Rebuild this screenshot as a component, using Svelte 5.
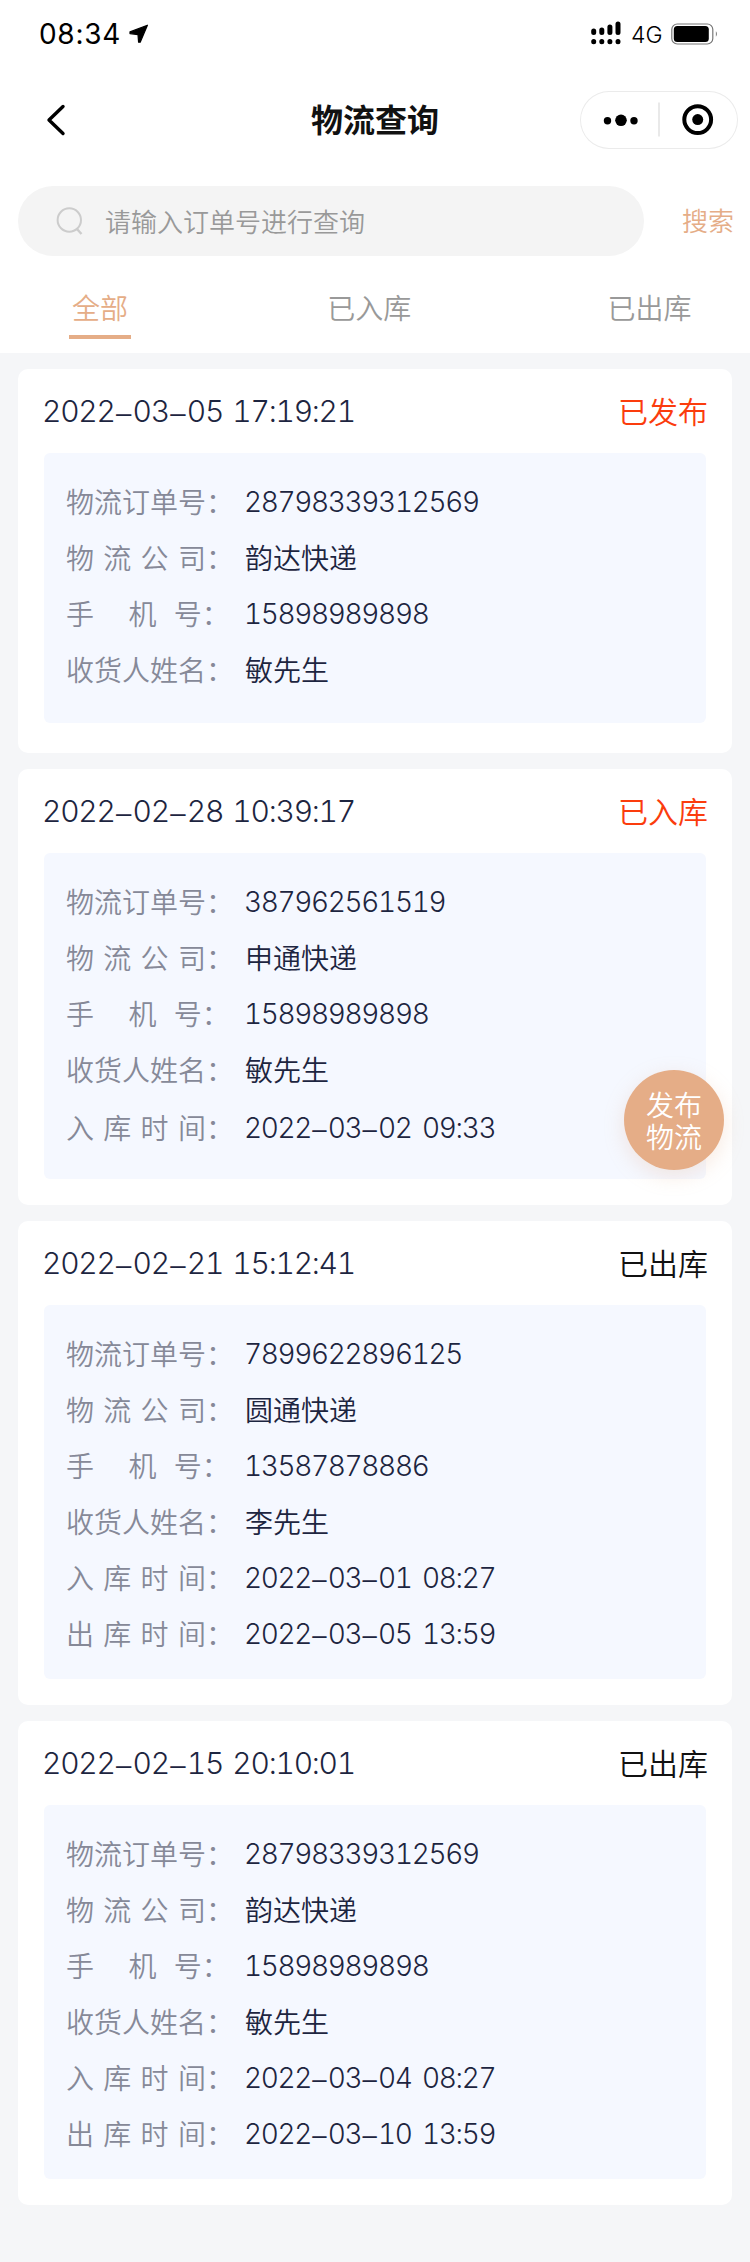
<script>
  const labels = {
    order: '物流订单号：',
    company: '物 流 公 司：',
    phone: '手    机  号：',
    receiver: '收货人姓名：',
    stored: '入 库 时 间：',
    shipped: '出 库 时 间：'
  };

  const tabs = ['全部', '已入库', '已出库'];

  const records = [
    {
      time: '2022–03–05 17:19:21', status: '已发布', active: true, size: 'tall',
      fields: [['order', '28798339312569'], ['company', '韵达快递'], ['phone', '15898989898'], ['receiver', '敏先生']]
    },
    {
      time: '2022–02–28 10:39:17', status: '已入库', active: true, size: 'mid',
      fields: [['order', '387962561519'], ['company', '申通快递'], ['phone', '15898989898'], ['receiver', '敏先生'], ['stored', '2022–03–02 09:33']]
    },
    {
      time: '2022–02–21 15:12:41', status: '已出库', active: false, size: 'full',
      fields: [['order', '7899622896125'], ['company', '圆通快递'], ['phone', '13587878886'], ['receiver', '李先生'], ['stored', '2022–03–01 08:27'], ['shipped', '2022–03–05 13:59']]
    },
    {
      time: '2022–02–15 20:10:01', status: '已出库', active: false, size: 'full',
      fields: [['order', '28798339312569'], ['company', '韵达快递'], ['phone', '15898989898'], ['receiver', '敏先生'], ['stored', '2022–03–04 08:27'], ['shipped', '2022–03–10 13:59']]
    }
  ];
</script>

{#snippet digits(text)}{#each text.split('–') as part, i}{#if i}<span class="dash">–</span>{/if}{part}{/each}{/snippet}

<div class="page">
  <header>
    <div class="statusbar">
      <div class="clock">
        <span>08:34</span>
        <svg width="20" height="20" viewBox="0 0 20 20"><path d="M1 7.9 L18.4 1.2 L11.2 18.2 L9.6 18.2 L9 10.6 L1 9.6Z" stroke="#000" stroke-width="1.2" stroke-linejoin="round" /></svg>
      </div>
      <div class="signals">
        <svg class="bars" width="30" height="24" viewBox="0 0 30 24">
          <g stroke="#000" stroke-width="5" stroke-linecap="round">
            <path d="M2.7 10V11.5M10.8 9V11.5M18.9 6V11.5M27 3V11.5M2.7 20.4V20.8M10.8 20.4V20.8M18.9 20.4V20.8M27 20.4V20.8" />
          </g>
        </svg>
        <span class="net">4G</span>
        <svg width="48" height="22" viewBox="0 0 48 22">
          <rect x=".8" y="1" width="41" height="20" rx="5.5" fill="none" stroke="#777" stroke-width="1.2" />
          <rect x="2.8" y="3" width="35" height="16" rx="3.5" />
          <path d="M44.9 8.3 Q47 11 44.9 13.7Z" fill="#777" />
        </svg>
      </div>
    </div>

    <nav>
      <button class="back" aria-label="返回">
        <svg width="22" height="34" viewBox="0 0 22 34"><path d="M19 3.5 L5 17 L19 30.5" fill="none" stroke="#000" stroke-width="3.4" stroke-linecap="round" stroke-linejoin="round" /></svg>
      </button>
      <h1>物流查询</h1>
      <div class="capsule">
        <svg width="158" height="58" viewBox="0 0 158 58">
          <circle cx="27.5" cy="29.7" r="3.7" /><circle cx="41" cy="29.3" r="5.8" /><circle cx="54" cy="29.7" r="3.7" />
          <path d="M79 11.5V45.5" stroke="#ddd" stroke-width="1.3" />
          <circle cx="117.7" cy="28.6" r="13.4" fill="none" stroke="#000" stroke-width="4" />
          <circle cx="117.7" cy="28.6" r="5.5" />
        </svg>
      </div>
    </nav>

    <div class="search">
      <div class="field">
        <svg width="28" height="30" viewBox="0 0 28 30" fill="none" stroke="#ccc" stroke-width="2"><circle cx="13.3" cy="14" r="11.7" /><path d="M20.5 22.5 L25.5 28" stroke-width="2.4" /></svg>
        <span>请输入订单号进行查询</span>
      </div>
      <span class="go">搜索</span>
    </div>

    <div class="tabs">
      {#each tabs as tab, i}
        <div class="tab" class:on={i === 0}>{tab}</div>
      {/each}
    </div>
  </header>

  <main>
    {#each records as record}
      <section class="card {record.size}">
        <div class="head">
          <span class="time">{@render digits(record.time)}</span>
          <span class="state" class:active={record.active}>{record.status}</span>
        </div>
        <div class="panel">
          {#each record.fields as [key, value]}
            <div class="row">
              <span class="label {key}">{labels[key]}</span>
              {#if key === 'company' || key === 'receiver'}
                <span class="name">{value}</span>
              {:else}
                <span class="value">{@render digits(value)}</span>
              {/if}
            </div>
          {/each}
        </div>
      </section>
    {/each}
  </main>

  <button class="publish"><span>发布</span><span>物流</span></button>
</div>

<style>
  :global(body) { background: #f5f6f8; }
  .page {
    position: relative;
    width: 750px;
    height: 2262px;
    background: #f5f6f8;
    font-family: "Noto Sans CJK SC", sans-serif;
    font-weight: 350;
    color: #1d2540;
  }
  svg { display: block; }
  button { border: 0; padding: 0; background: none; font: inherit; }
  header { height: 353px; background: #fff; }

  .statusbar {
    height: 68px;
    padding: 0 31px 0 39px;
    box-sizing: border-box;
    display: flex;
    justify-content: space-between;
    align-items: center;
    color: #000;
  }
  .clock { display: flex; align-items: center; gap: 8px; font: 420 28px/40px Inter, sans-serif; letter-spacing: .7px; }
  .signals { display: flex; align-items: center; }
  .bars { margin-top: -3px; }
  .net { font: 350 23px/30px Inter, sans-serif; width: 31px; margin: 1px 9px 0 10px; }

  nav { height: 104px; display: grid; grid-template-columns: 170px 1fr 170px; align-items: center; }
  .back { margin-left: 44px; width: 22px; }
  h1 { margin: 0; padding-bottom: 4px; text-align: center; font-size: 32px; line-height: 48px; font-weight: 600; color: #111; }
  .capsule { width: 158px; height: 58px; border-radius: 29px; box-shadow: inset 0 0 0 1px #ebebeb; }

  .search { display: flex; align-items: center; justify-content: space-between; height: 70px; margin-top: 14px; padding: 0 16px 0 18px; }
  .field { width: 626px; height: 70px; border-radius: 35px; background: #f4f4f4; display: flex; align-items: center; box-sizing: border-box; padding-left: 38px; gap: 21px; color: #999; font-size: 26px; }
  .field span { padding-bottom: 2px; }
  .go { color: #e5ad87; font-size: 26px; line-height: 36px; padding-bottom: 3px; }

  .tabs { display: flex; justify-content: space-between; padding: 30px 58.5px 0 69px; font-size: 28px; line-height: 42px; color: #999; }
  .tab { height: 53px; box-sizing: border-box; min-width: 62px; text-align: center; border-bottom: 4px solid transparent; }
  .on { color: #e5ad87; border-color: #e5ad87; }

  main { display: flex; flex-direction: column; gap: 16px; padding: 16px 18px; }
  .card { background: #fff; border-radius: 10px; padding: 0 26px 26px; }
  .card.tall { padding-bottom: 30px; }
  .head { height: 84px; display: flex; align-items: center; justify-content: space-between; }
  .time, .value { font-family: Inter, sans-serif; font-weight: 340; font-feature-settings: "tnum"; word-spacing: .08em; }
  .time { font-size: 30px; letter-spacing: -1.25px; margin-left: -2px; }
  .dash { display: inline-block; width: .65em; font-size: .92em; text-align: center; letter-spacing: 0; font-family: "Liberation Sans", sans-serif; }
  .state { font-size: 30px; line-height: 44px; margin-right: -2px; padding-bottom: 2px; color: #111; }
  .state.active { color: #fb3c0d; }
  .panel { background: #f5f8ff; border-radius: 6px; padding: 21px 22px 25px; }
  .full .panel { padding-bottom: 17px; }
  .row { display: flex; height: 56px; line-height: 56px; font-size: 28px; }
  .mid .row:last-child { padding-top: 2px; height: 54px; }
  .label { width: 179px; line-height: 54px; white-space: pre; color: #868998; word-spacing: 3.05px; }
  .phone { word-spacing: 2.4px; }
  .name { line-height: 54px; }
  .value { letter-spacing: -1.35px; margin-left: -1px; word-spacing: .15em; }

  .publish {
    position: absolute;
    left: 624px;
    top: 1070px;
    width: 100px;
    height: 100px;
    border-radius: 50%;
    background: #e5ad87;
    box-shadow: 0 6px 20px rgba(229, 173, 135, .25);
    color: #fff;
    font-size: 28px;
    line-height: 32px;
    display: flex;
    flex-direction: column;
    align-items: center;
    justify-content: center;
  }
</style>
